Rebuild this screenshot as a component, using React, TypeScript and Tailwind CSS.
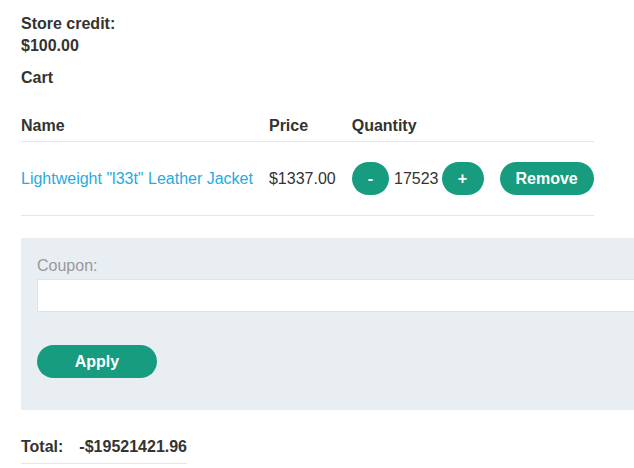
import { useState } from "react";

function PillButton({ label, className = "" }: { label: string; className?: string }) {
	return (
		<button
			type="button"
			className={`h-[33px] rounded-full bg-[#189c80] px-4 text-base font-bold leading-none text-white ${className}`}
		>
			{label}
		</button>
	);
}

function App() {
	const [coupon, setCoupon] = useState("");

	return (
		<div
			className="min-h-screen w-full overflow-hidden bg-white pl-[21px] pt-[13px] text-base text-[#333332]"
			style={{ fontFamily: '"Liberation Sans", Arial, sans-serif' }}
		>
			<div className="font-bold leading-[22px]">Store credit:</div>
			<div className="font-bold leading-[22px]">$100.00</div>
			<div className="mt-[10px] font-bold leading-[22px]">Cart</div>

			<table className="mt-[22px] border-collapse">
				<thead>
					<tr className="border-b border-[#e6e6e6]">
						<th className="pb-1 pr-4 pt-1 text-left font-bold leading-[22px]">Name</th>
						<th className="pb-1 pr-4 pt-1 text-left font-bold leading-[22px]">Price</th>
						<th className="pb-1 pr-4 pt-1 text-left font-bold leading-[22px]">Quantity</th>
						<th className="pb-1 pt-1" />
					</tr>
				</thead>
				<tbody>
					<tr className="border-b border-[#e6e6e6]">
						<td className="py-5 pr-4 leading-[22px]">
							<a href="#" className="text-[#29a9e0]">
								Lightweight "l33t" Leather Jacket
							</a>
						</td>
						<td className="py-5 pr-4 leading-[22px]">$1337.00</td>
						<td className="py-5 pr-4">
							<div className="flex items-center">
								<PillButton label="-" />
								<span className="ml-[5px] mr-[3px] leading-[22px]">17523</span>
								<PillButton label="+" className="w-[42px] px-0" />
							</div>
						</td>
						<td className="py-5">
							<PillButton label="Remove" />
						</td>
					</tr>
				</tbody>
			</table>

			<div className="mt-[22px] w-[680px] bg-[#e8eef1] px-4 pb-8 pt-[17px]">
				<label className="block leading-[22px] text-[#999999]">Coupon:</label>
				<input
					type="text"
					value={coupon}
					onChange={(e) => setCoupon(e.target.value)}
					className="mt-[2px] block h-[33px] w-full border border-[#e0e4e6] bg-white px-2 outline-none"
				/>
				<button
					type="button"
					className="mt-[33px] h-[33px] w-[120px] rounded-full bg-[#189c80] text-base font-bold leading-none text-white"
				>
					Apply
				</button>
			</div>

			<table className="mt-[26px] border-collapse">
				<tbody>
					<tr className="border-b border-[#e6e6e6]">
						<th className="pb-[5px] pr-4 text-left font-bold leading-[22px]">Total:</th>
						<th className="pb-[5px] text-left font-bold leading-[22px]">-$19521421.96</th>
					</tr>
				</tbody>
			</table>
		</div>
	);
}

export default App;
